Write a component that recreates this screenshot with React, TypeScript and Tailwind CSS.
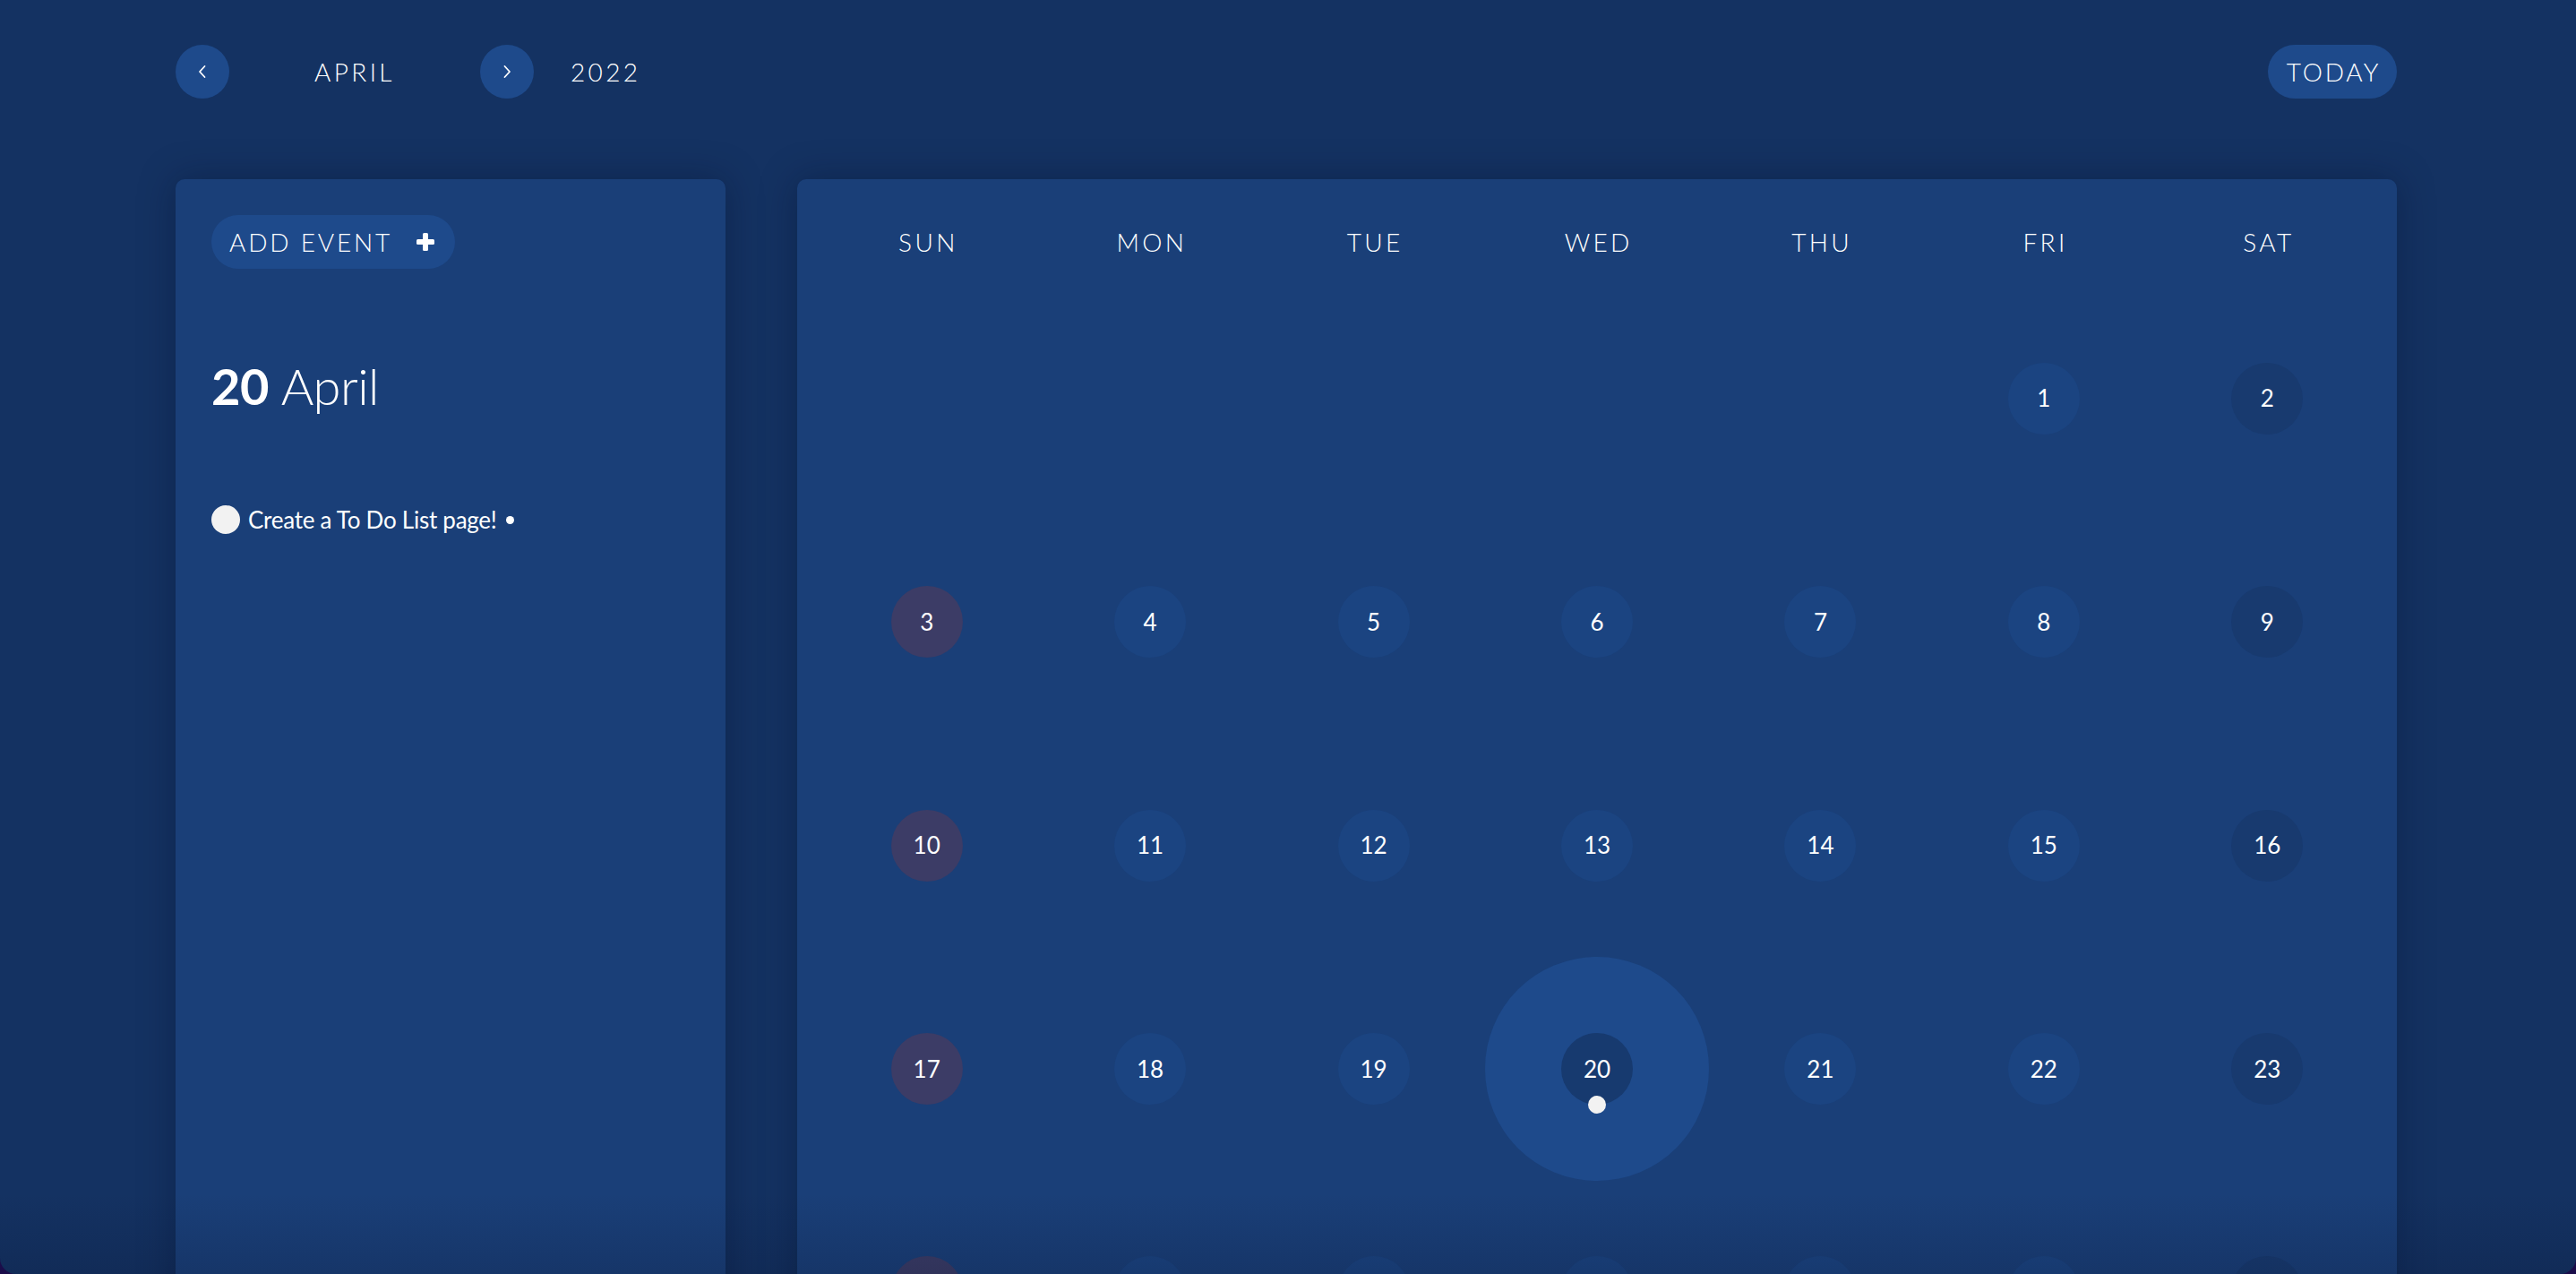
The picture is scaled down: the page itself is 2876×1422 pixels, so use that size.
import React from "react";

type Cell = { day: number | null; col: number };

function buildCells(): Cell[] {
  const cells: Cell[] = [];
  const startOffset = 5; // April 1 2022 is a Friday
  for (let i = 0; i < 35; i++) {
    const d = i - startOffset + 1;
    cells.push({ day: d >= 1 && d <= 30 ? d : null, col: i % 7 });
  }
  return cells;
}

function ChevronLeftIcon() {
  return (
    <svg width="12" height="16" viewBox="0 0 12 16" fill="none">
      <path d="M8.5 2 L3 8 L8.5 14" stroke="#ffffff" strokeWidth="1.8" strokeLinecap="round" strokeLinejoin="round" />
    </svg>
  );
}

function ChevronRightIcon() {
  return (
    <svg width="12" height="16" viewBox="0 0 12 16" fill="none">
      <path d="M3.5 2 L9 8 L3.5 14" stroke="#ffffff" strokeWidth="1.8" strokeLinecap="round" strokeLinejoin="round" />
    </svg>
  );
}

function PlusIcon() {
  return (
    <svg width="22" height="22" viewBox="0 0 22 22">
      <rect x="8" y="1" width="6" height="20" rx="1.5" fill="#ffffff" />
      <rect x="1" y="8" width="20" height="6" rx="1.5" fill="#ffffff" />
    </svg>
  );
}

const days = ["SUN", "MON", "TUE", "WED", "THU", "FRI", "SAT"];

function DayCell({ cell }: { cell: Cell }) {
  if (cell.day === null) {
    return <div className="aspect-square" />;
  }
  const isToday = cell.day === 20;
  let circleBg = "bg-[#1b4481]";
  if (cell.col === 0) circleBg = "bg-[#3c3c66]";
  if (cell.col === 6) circleBg = "bg-[#183a6f]";

  if (isToday) {
    return (
      <div className="aspect-square flex items-center justify-center">
        <div className="w-full h-full rounded-full bg-[#1e4a8b] flex items-center justify-center">
          <div className="relative w-20 h-20 rounded-full bg-[#173a6f] flex items-center justify-center text-[26px] font-normal text-white">
            20
            <span className="absolute left-1/2 bottom-0 w-5 h-5 -translate-x-1/2 translate-y-1/2 rounded-full bg-[#f2f2f2]" />
          </div>
        </div>
      </div>
    );
  }

  return (
    <div className="aspect-square flex items-center justify-center">
      <div className={`w-20 h-20 rounded-full ${circleBg} flex items-center justify-center text-[26px] font-normal text-white`}>
        {cell.day}
      </div>
    </div>
  );
}

export default function App() {
  const cells = buildCells();
  return (
    <div className="h-[1422px] w-full bg-[#1b0d4a] font-['Lato',sans-serif]">
      <div className="relative h-full w-full overflow-hidden rounded-b-[18px] bg-[#143262] text-white">
        <div className="pl-[196px] pr-[200px] pt-[50px]">
          {/* Header */}
          <div className="flex items-center h-[60px]">
            <button className="w-[60px] h-[60px] rounded-full bg-[#1e4a8b] flex items-center justify-center">
              <ChevronLeftIcon />
            </button>
            <div className="w-[280px] text-center text-[28px] tracking-[0.12em] font-light">APRIL</div>
            <button className="w-[60px] h-[60px] rounded-full bg-[#1e4a8b] flex items-center justify-center">
              <ChevronRightIcon />
            </button>
            <div className="ml-[41px] text-[28px] tracking-[0.12em] font-light">2022</div>
            <div className="flex-1" />
            <button className="h-[60px] w-[144px] rounded-full bg-[#1e4a8b] text-[28px] tracking-[0.1em] font-light flex items-center justify-center pl-[3px]">
              TODAY
            </button>
          </div>

          {/* Panels */}
          <div className="mt-[90px] flex gap-[80px] items-start">
            {/* Left panel */}
            <div className="w-[614px] h-[1400px] shrink-0 rounded-[10px] bg-[#1a3f78] shadow-[0_0_40px_rgba(5,15,40,0.35)] pl-[40px] pt-[40px]">
              <button className="h-[60px] w-[272px] rounded-full bg-[#1e4a8b] flex items-center pl-[20px] text-[28px] tracking-[0.1em] font-light">
                <span>ADD EVENT</span>
                <span className="ml-[26px] flex items-center"><PlusIcon /></span>
              </button>
              <div className="mt-[97px] text-[56px] leading-[1.2] tracking-[-0.01em]">
                <span className="font-bold">20</span> <span className="font-light">April</span>
              </div>
              <div className="mt-[100px] flex items-center h-[32px]">
                <span className="w-[32px] h-[32px] rounded-full bg-[#f2f2f2] shrink-0" />
                <span className="ml-[9px] text-[26px] tracking-[-0.01em] font-normal">Create a To Do List page!</span>
                <span className="ml-[10px] w-[9px] h-[9px] rounded-full bg-white" />
              </div>
            </div>

            {/* Calendar panel */}
            <div className="flex-1 rounded-[10px] bg-[#1a3f78] shadow-[0_0_40px_rgba(5,15,40,0.35)] p-[20px]">
              <div className="grid grid-cols-7 h-[100px] items-center">
                {days.map((d) => (
                  <div key={d} className="text-center text-[28px] tracking-[0.12em] font-light pl-[0.12em]">
                    {d}
                  </div>
                ))}
              </div>
              <div className="grid grid-cols-7">
                {cells.map((c, i) => (
                  <DayCell key={i} cell={c} />
                ))}
              </div>
            </div>
          </div>
        </div>

        {/* bottom fade */}
        <div className="pointer-events-none absolute left-0 right-0 bottom-0 h-[90px] bg-gradient-to-b from-transparent to-[rgba(8,20,50,0.22)]" />
      </div>
    </div>
  );
}
